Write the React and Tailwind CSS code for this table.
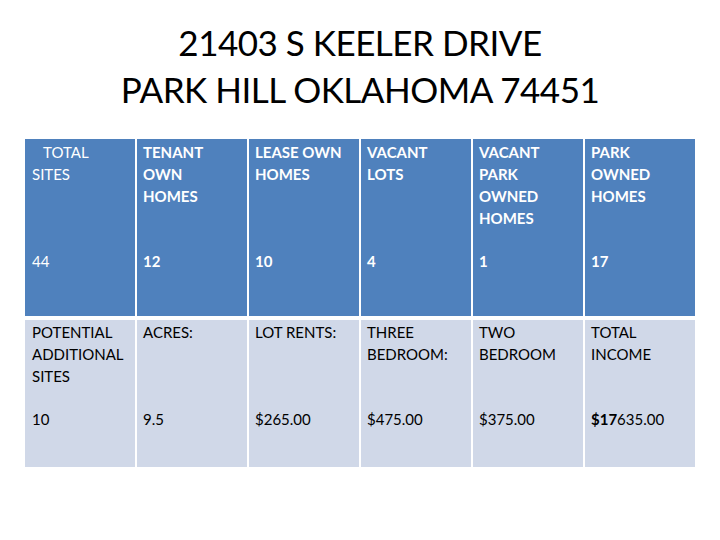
import React from "react";

const font = { fontFamily: "Lato, 'Open Sans', sans-serif" };

export default function App() {
  const head = [
    { t: ["\u00a0\u00a0\u00a0TOTAL", "SITES"], b: false },
    { t: ["TENANT", "OWN", "HOMES"], b: true },
    { t: ["LEASE OWN", "HOMES"], b: true },
    { t: ["VACANT", "LOTS"], b: true },
    { t: ["VACANT", "PARK", "OWNED", "HOMES"], b: true },
    { t: ["PARK", "OWNED", "HOMES"], b: true },
  ];
  const vals = [
    { v: "44", b: false },
    { v: "12", b: true },
    { v: "10", b: true },
    { v: "4", b: true },
    { v: "1", b: true },
    { v: "17", b: true },
  ];
  const head2 = [
    ["POTENTIAL", "ADDITIONAL", "SITES"],
    ["ACRES:"],
    ["LOT RENTS:"],
    ["THREE", "BEDROOM:"],
    ["TWO", "BEDROOM"],
    ["TOTAL", "INCOME"],
  ];
  const vals2 = [
    <>10</>,
    <>9.5</>,
    <>$265.00</>,
    <>$475.00</>,
    <>$375.00</>,
    <>
      <span className="font-bold">$17</span>635.00
    </>,
  ];
  return (
    <div className="w-[720px] h-[540px] bg-white overflow-hidden" style={font}>
      <div className="pt-[19px] text-center text-[35px] leading-[47px] tracking-[-0.5px] text-black">
        <div>21403 S KEELER DRIVE</div>
        <div>PARK HILL OKLAHOMA 74451</div>
      </div>
      <div className="ml-[25px] mt-[26px] w-[670px] text-[15px] leading-[22px]">
        <div className="grid grid-cols-6 gap-x-[2px]">
          {head.map((h, i) => (
            <div
              key={i}
              className={`h-[109px] bg-[#4f81bd] text-white pt-[2px] ${
                i === 0 ? "pl-[7px]" : "pl-[6px]"
              } ${h.b ? "font-bold" : ""}`}
            >
              {h.t.map((l, j) => (
                <div key={j} className="whitespace-pre">
                  {l}
                </div>
              ))}
            </div>
          ))}
          {vals.map((v, i) => (
            <div
              key={i}
              className={`h-[68px] bg-[#4f81bd] text-white pt-[2px] ${
                i === 0 ? "pl-[7px]" : "pl-[6px]"
              } ${v.b ? "font-bold" : ""}`}
            >
              {v.v}
            </div>
          ))}
        </div>
        <div className="mt-[4px] grid grid-cols-6 gap-x-[2px] text-black">
          {head2.map((h, i) => (
            <div
              key={i}
              className={`h-[86px] bg-[#d0d8e8] pt-[1px] ${
                i === 0 ? "pl-[7px]" : "pl-[6px]"
              }`}
            >
              {h.map((l, j) => (
                <div key={j}>{l}</div>
              ))}
            </div>
          ))}
          {vals2.map((v, i) => (
            <div
              key={i}
              className={`h-[61px] bg-[#d0d8e8] pt-[2px] ${
                i === 0 ? "pl-[7px]" : "pl-[6px]"
              }`}
            >
              {v}
            </div>
          ))}
        </div>
      </div>
    </div>
  );
}
